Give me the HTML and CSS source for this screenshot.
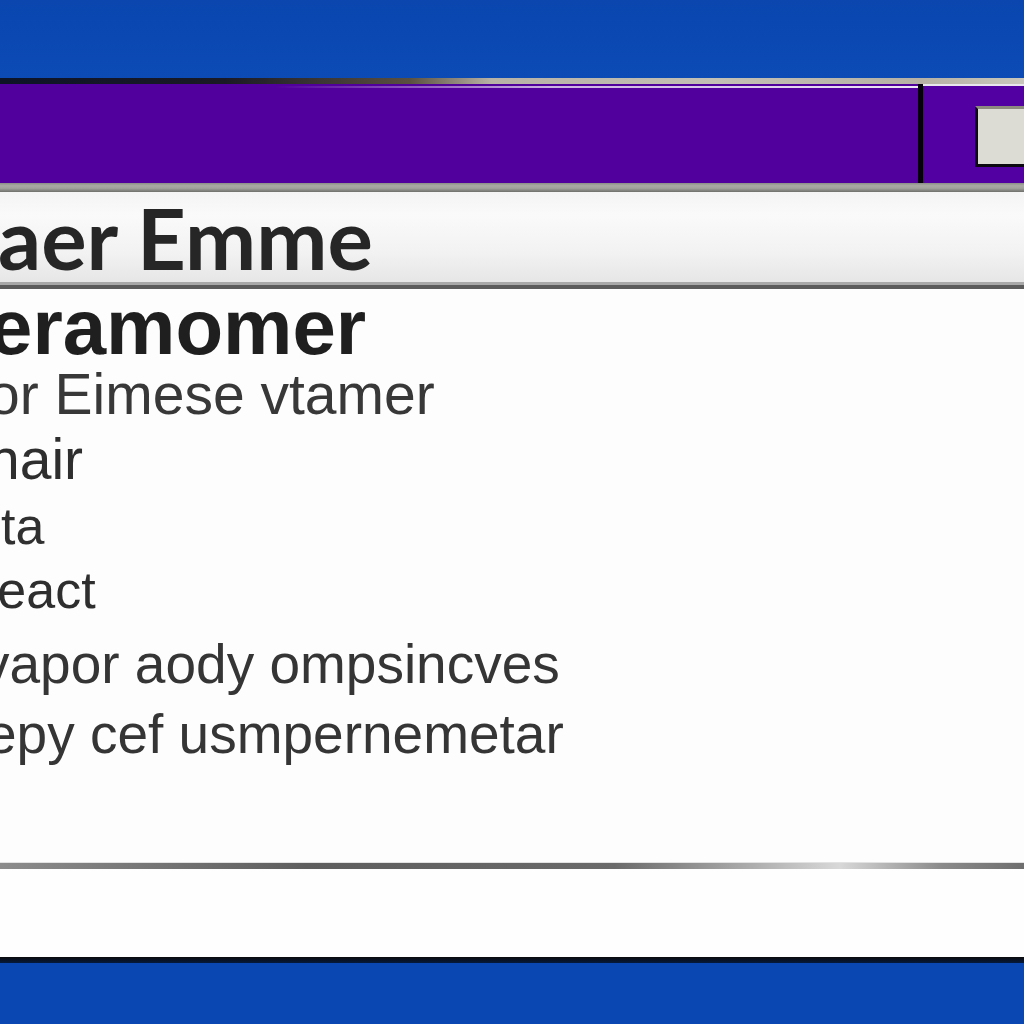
FILE: index.html
```html
<!DOCTYPE html>
<html lang="en">
<head>
<meta charset="utf-8">
<title>Window</title>
<link rel="stylesheet" href="styles.css">
</head>
<body>
<div class="desktop">
  <div class="window">
    <div class="window-top"></div>
    <div class="titlebar">
      <div class="title-main"></div>
      <div class="title-sep"></div>
      <div class="title-side">
        <div class="title-button"></div>
      </div>
    </div>
    <div class="titlebar-edge"></div>
    <div class="header"><span class="header-text">aer Emme</span></div>
    <div class="content">
      <div class="line l1">eramomer</div>
      <div class="line l2">or Eimese vtamer</div>
      <div class="line l3">nair</div>
      <div class="line l4">ta</div>
      <div class="line l5">react</div>
      <div class="line l6">vapor aody ompsincves</div>
      <div class="line l7">epy cef usmpernemetar</div>
    </div>
    <div class="divider"></div>
    <div class="footer"></div>
    <div class="window-bottom"></div>
  </div>
</div>
</body>
</html>
```

FILE: styles.css
```css
html, body {
  margin: 0;
  padding: 0;
}
body {
  width: 1024px;
  height: 1024px;
  overflow: hidden;
  background: #0b47b2;
  font-family: "Liberation Sans", Arial, sans-serif;
}
.desktop {
  padding-top: 78px;
  background: linear-gradient(to bottom, #0a46ae 0, #0c4ab6 78px);
}
.window {
  display: flex;
  flex-direction: column;
}
.window-top {
  height: 6px;
  background: linear-gradient(to right, #0d1428 0, #1a1a26 22%, #5a5040 40%, #b8b2a6 48%, #c4c0b6 70%, #b6b1a4 90%, #c9c7bd 100%);
}
.titlebar {
  display: flex;
  height: 99px;
}
.title-main {
  flex: 1;
  background-color: #52009d;
  background-image: linear-gradient(to right, rgba(255,255,255,0) 0, rgba(255,255,255,0) 30%, rgba(255,255,255,0.7) 60%, rgba(255,255,255,0.9) 100%);
  background-size: 100% 2px;
  background-repeat: no-repeat;
  background-position: 0 2px;
}
.title-sep {
  width: 5px;
  background: #05000c;
}
.title-side {
  width: 101px;
  background: #5200a2;
  display: flex;
  justify-content: flex-end;
  padding-top: 20px;
  box-sizing: border-box;
  border-top: 2px solid #e9e6ee;
}
.title-button {
  width: 46px;
  height: 55px;
  background: #dcdcd4;
  border-top: 3px solid #8d8a80;
  border-left: 3px solid #0c0910;
  border-bottom: 3px solid #0c0910;
}
.titlebar-edge {
  height: 9px;
  background: linear-gradient(to bottom, #8a8e86 0, #a9aba3 30%, #9ea09a 60%, #6e6f6c 100%);
}
.header {
  height: 97px;
  box-sizing: border-box;
  padding-top: 3px;
  background: linear-gradient(to bottom, #f4f4f4 0, #fafafa 25%, #f2f2f2 65%, #e5e5e5 100%);
  border-bottom: 4px solid #5b5b5b;
  box-shadow: inset 0 -3px 0 #a8a8a8;
  overflow: hidden;
}
.header-text {
  display: block;
  margin-left: -2px;
  font-family: "Lato", "Liberation Sans", sans-serif;
  font-weight: 700;
  font-size: 85px;
  line-height: 85px;
  color: #262626;
  white-space: nowrap;
}
.content {
  height: 574px;
  background: #fdfdfd;
  overflow: hidden;
}
.line {
  white-space: nowrap;
  color: #333333;
}
.l1 { font-size: 78px; line-height: 76px; font-weight: 700; color: #1f1f1f; margin-left: -11px; }
.l2 { font-size: 57px; line-height: 58px; margin-left: -12px; color: #383838; }
.l3 { font-size: 57px; line-height: 72px; margin-left: -12px; color: #2e2e2e; }
.l4 { font-size: 52px; line-height: 62px; margin-left: 1px; color: #303030; }
.l5 { font-size: 52px; line-height: 66px; margin-left: -20px; color: #2e2e2e; }
.l6 { font-size: 55px; line-height: 82px; margin-left: -18px; color: #353535; }
.l7 { font-size: 55px; line-height: 58px; margin-left: -14px; color: #353535; }
.divider {
  height: 6px;
  background: linear-gradient(to right, #8c8c8c 0, #5e5e5e 30%, #6a6a6a 60%, #d8d8d8 82%, #8a8a8a 92%, #6e6e6e 100%);
  box-shadow: 0 -1px 0 #e2e2e2;
}
.footer {
  height: 88px;
  background: #fefefe;
}
.window-bottom {
  height: 6px;
  background: linear-gradient(to bottom, #0b0b0b 0, #061a3c 100%);
}
```
